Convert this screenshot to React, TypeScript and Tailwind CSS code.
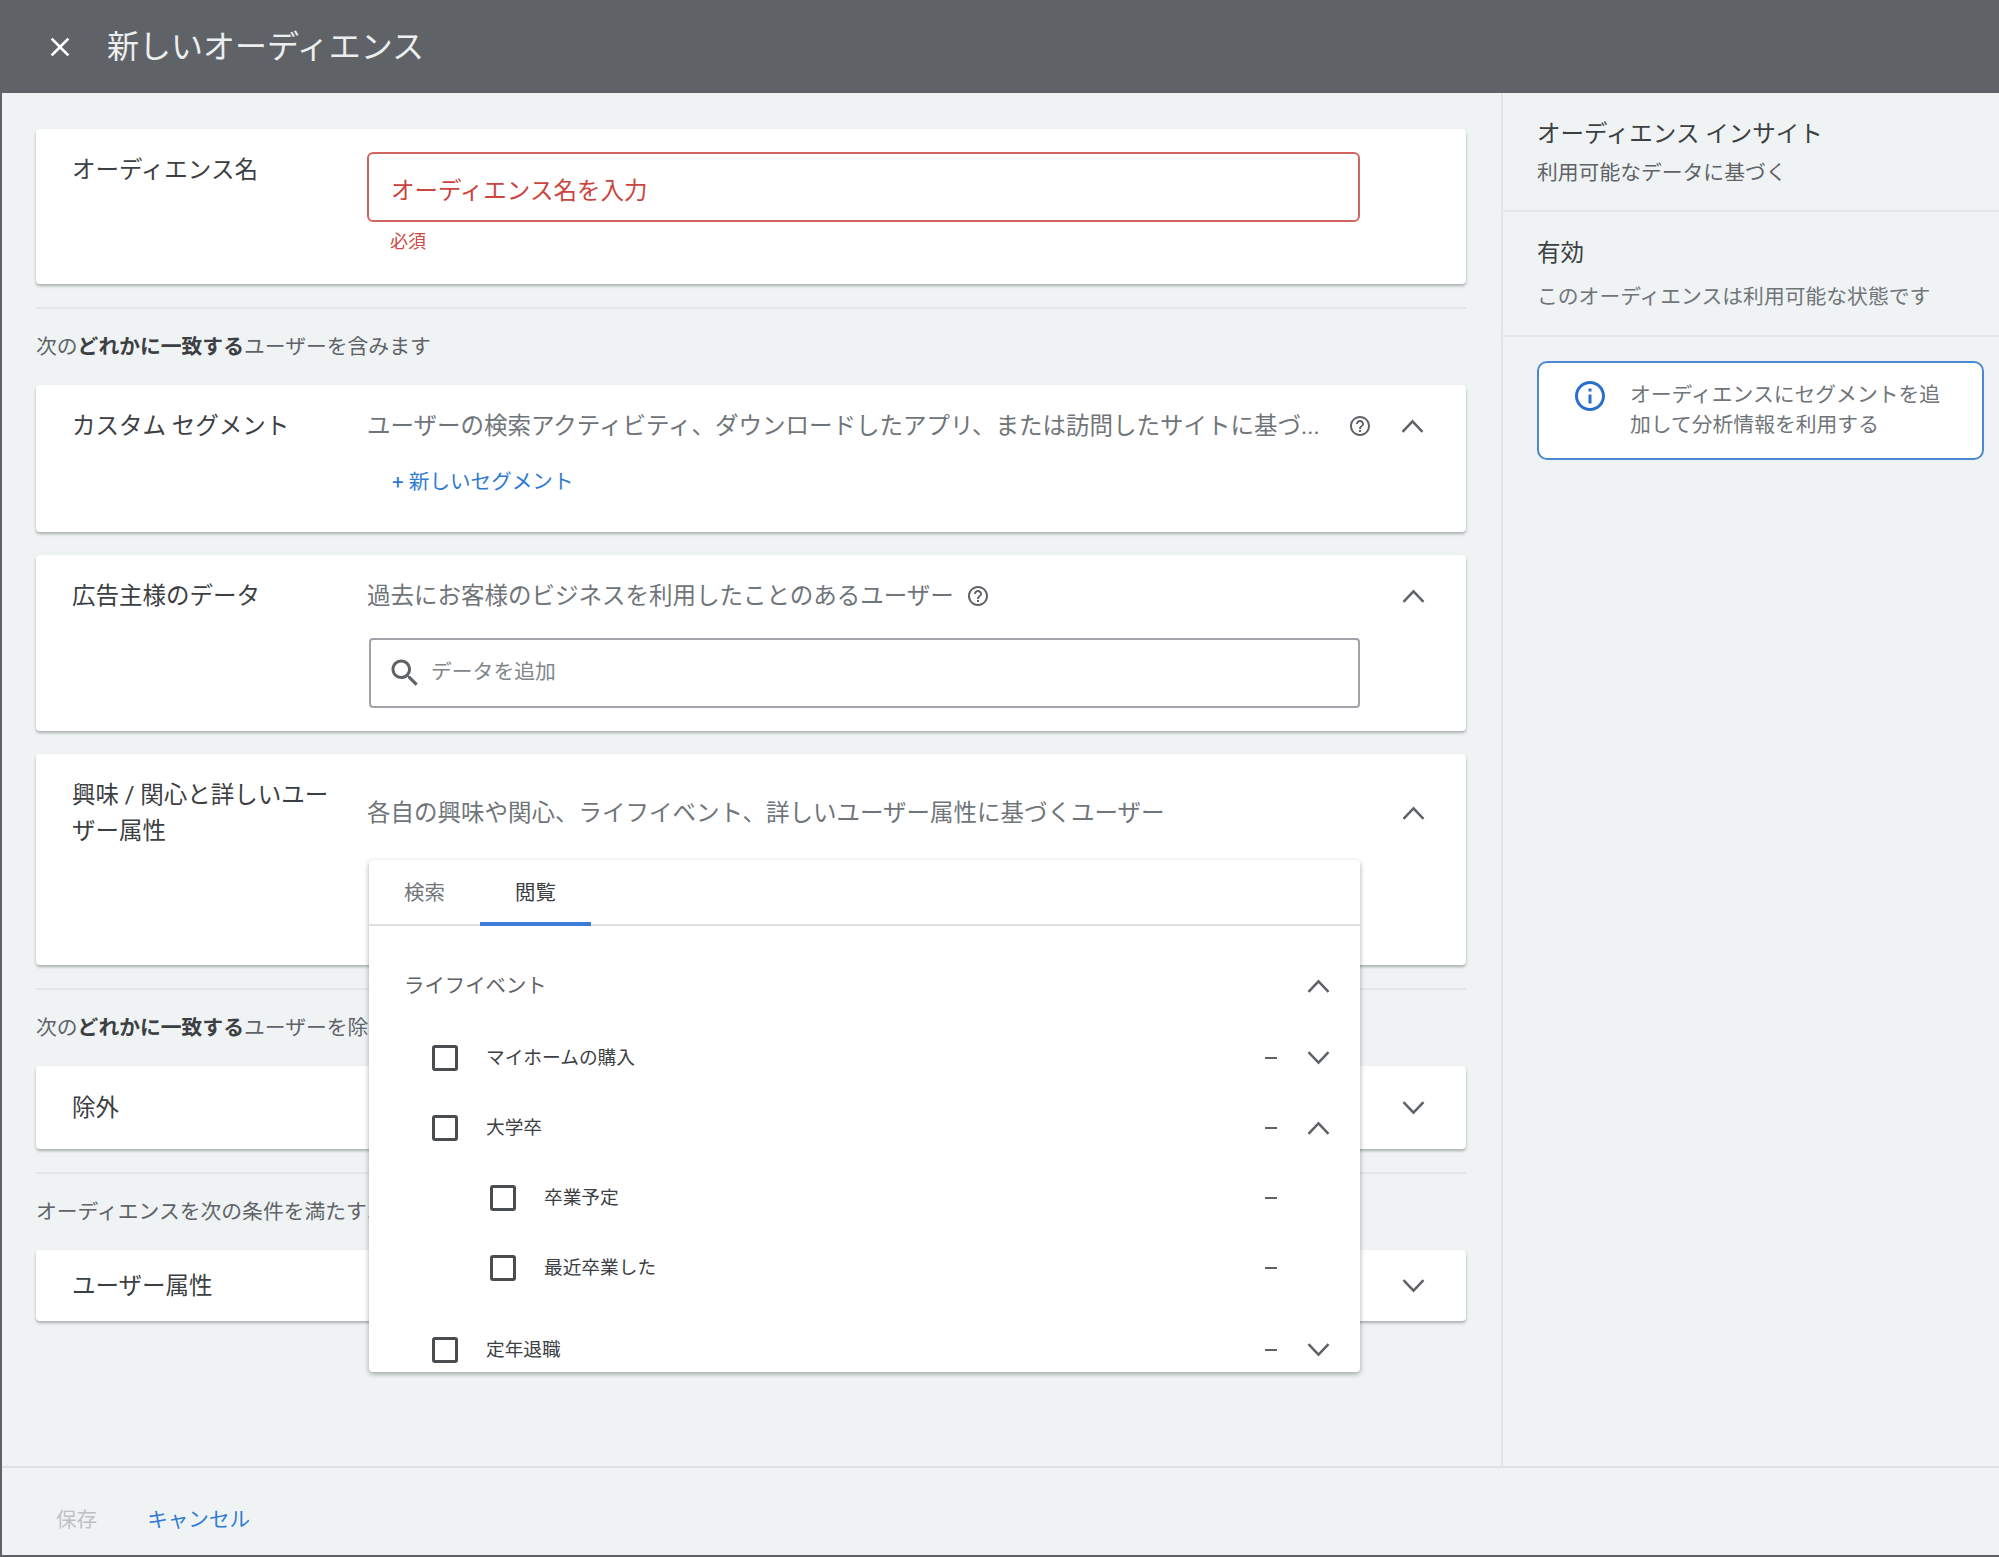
import React from "react";

const Up = ({ c = "text-[#5f6368]" }: { c?: string }) => (
  <svg viewBox="0 0 23 14" className={`w-[23px] h-[14px] fill-none stroke-current shrink-0 ${c}`} strokeWidth="2.5">
    <path d="M1.5 12.8L11.5 2.4L21.5 12.8" />
  </svg>
);
const Down = ({ c = "text-[#5f6368]" }: { c?: string }) => (
  <svg viewBox="0 0 23 14" className={`w-[23px] h-[14px] fill-none stroke-current shrink-0 ${c}`} strokeWidth="2.5">
    <path d="M1.5 1.2L11.5 11.6L21.5 1.2" />
  </svg>
);
const Help = () => (
  <svg viewBox="0 0 24 24" className="w-[24px] h-[24px] fill-[#5f6368] shrink-0">
    <path d="M11 18h2v-2h-2v2zm1-16C6.48 2 2 6.48 2 12s4.48 10 10 10 10-4.48 10-10S17.52 2 12 2zm0 18c-4.41 0-8-3.59-8-8s3.59-8 8-8 8 3.59 8 8-3.59 8-8 8zm0-14c-2.21 0-4 1.79-4 4h2c0-1.1.9-2 2-2s2 .9 2 2c0 2-3 1.75-3 5h2c0-2.25 3-2.5 3-5 0-2.21-1.79-4-4-4z" />
  </svg>
);

const cardBase = "bg-white rounded-[4px] shadow-[0_2px_3px_rgba(60,64,67,0.38)] relative shrink-0";
const labelCol = "w-[295px] shrink-0 text-[23.5px] leading-[36px] text-[#3c4043]";
const desc = "text-[23.5px] leading-[36px] text-[#70757a]";

const SectionLabel = ({ children }: { children: React.ReactNode }) => (
  <div className="h-[76px] pt-[2px] flex items-center text-[20.8px] text-[#5f6368] whitespace-nowrap shrink-0">
    {children}
  </div>
);
const Divider = () => <div className="h-[2px] bg-[#e3e6e8] mt-[23px] shrink-0" />;

const Row = ({
  label,
  chevron,
  nested,
  className = "",
}: {
  label: string;
  chevron?: "up" | "down";
  nested?: boolean;
  className?: string;
}) => (
  <div className={`h-[70px] flex items-center pr-[30px] shrink-0 ${nested ? "pl-[121px]" : "pl-[63px]"} ${className}`}>
    <span className="w-[26px] h-[26px] border-[3px] border-[#4a4d50] rounded-[3px] shrink-0" />
    <span className="ml-[28px] flex-1 text-[18.7px] text-[#3c4043]">{label}</span>
    <span className="w-[12px] h-[2px] bg-[#5f6368] shrink-0" />
    <span className="w-[23px] ml-[30px] flex items-center shrink-0">
      {chevron === "up" && <Up />}
      {chevron === "down" && <Down />}
    </span>
  </div>
);

export default function App() {
  return (
    <div
      className="w-[1999px] h-[1557px] flex flex-col bg-[#eff3f4] border-l-2 border-b-2 border-[#5f6368] overflow-hidden"
      style={{ fontFamily: '"Roboto","Noto Sans CJK JP",sans-serif' }}
    >
      <header className="h-[93px] -ml-[2px] bg-[#5f6368] flex items-center shrink-0 pl-[44px] text-white">
        <svg viewBox="0 0 24 24" className="w-[32px] h-[32px] fill-white shrink-0">
          <path d="M19 6.41L17.59 5 12 10.59 6.41 5 5 6.41 10.59 12 5 17.59 6.41 19 12 13.41 17.59 19 19 17.59 13.41 12z" />
        </svg>
        <h1 className="ml-[31px] text-[32px] font-normal text-[#eceeef] whitespace-nowrap">新しいオーディエンス</h1>
      </header>

      <div className="flex flex-1 min-h-0">
        <main className="w-[1499px] shrink-0 pl-[34px] pr-[35px] pt-[36px] flex flex-col">
          <section className={`${cardBase} h-[155px] flex pl-[36px] pt-[23px]`}>
            <div className={labelCol}>オーディエンス名</div>
            <div className="w-[993px]">
              <div className="h-[70px] border-2 border-[#d0665f] rounded-[6px] flex items-center pl-[22px] pt-[10px] text-[23.5px] text-[#c9453e]">
                オーディエンス名を入力
              </div>
              <div className="mt-[6px] pl-[23px] text-[18px] leading-[28px] text-[#cc4b44]">必須</div>
            </div>
          </section>

          <Divider />
          <SectionLabel>
            <span>次の<b className="font-bold text-[#3c4043]">どれかに一致する</b>ユーザーを含みます</span>
          </SectionLabel>

          <section className={`${cardBase} h-[147px] flex pl-[36px] pt-[23px]`}>
            <div className={labelCol}>カスタム セグメント</div>
            <div className="flex-1 min-w-0 pr-[41px]">
              <div className="flex items-center h-[36px]">
                <span className={`${desc} w-[958px] whitespace-nowrap`}>
                  ユーザーの検索アクティビティ、ダウンロードしたアプリ、または訪問したサイトに基づ...
                </span>
                <span className="ml-[23px]"><Help /></span>
                <span className="ml-[29px]"><Up /></span>
              </div>
              <div className="mt-[20px] pl-[25px] text-[20.6px] leading-[36px] text-[#2f7bd2]">+ 新しいセグメント</div>
            </div>
          </section>

          <section className={`${cardBase} h-[176px] mt-[23px] flex pl-[36px] pt-[23px]`}>
            <div className={labelCol}>広告主様のデータ</div>
            <div className="flex-1 min-w-0 pr-[41px]">
              <div className="flex items-center h-[36px]">
                <span className={`${desc} whitespace-nowrap`}>過去にお客様のビジネスを利用したことのあるユーザー</span>
                <span className="ml-[12px]"><Help /></span>
                <span className="ml-auto"><Up /></span>
              </div>
              <div className="mt-[24px] ml-[2px] w-[991px] h-[70px] border-2 border-[#a0a4a8] rounded-[4px] flex items-center pl-[16px]">
                <svg viewBox="0 0 24 24" className="w-[36px] h-[36px] fill-[#5f6368] shrink-0">
                  <path d="M15.5 14h-.79l-.28-.27C15.41 12.59 16 11.11 16 9.5 16 5.91 13.09 3 9.5 3S3 5.91 3 9.5 5.91 16 9.5 16c1.61 0 3.09-.59 4.23-1.57l.27.28v.79l5 4.99L20.49 19l-4.99-5zm-6 0C7.01 14 5 11.99 5 9.5S7.01 5 9.5 5 14 7.01 14 9.5 11.99 14 9.5 14z" />
                </svg>
                <span className="ml-[8px] text-[20.8px] text-[#80868b]">データを追加</span>
              </div>
            </div>
          </section>

          <section className={`${cardBase} h-[211px] mt-[23px] flex pl-[36px] pt-[23px]`}>
            <div className={`${labelCol} pr-[30px]`}>興味 / 関心と詳しいユーザー属性</div>
            <div className="flex-1 min-w-0 pr-[41px]">
              <div className="flex items-center h-[36px] mt-[18px]">
                <span className={`${desc} whitespace-nowrap`}>各自の興味や関心、ライフイベント、詳しいユーザー属性に基づくユーザー</span>
                <span className="ml-auto"><Up /></span>
              </div>
            </div>

            <div className="absolute left-[333px] top-[106px] z-10 w-[991px] h-[512px] bg-white rounded-[4px] shadow-[0_2px_5px_rgba(60,64,67,0.45)] overflow-hidden flex flex-col">
              <div className="h-[66px] shrink-0 flex border-b-2 border-[#dfe1e3]">
                <div className="w-[111px] flex items-center justify-center text-[20.4px] text-[#70757a] pt-[3px]">検索</div>
                <div className="w-[111px] flex items-center justify-center text-[20.4px] text-[#3c4043] border-b-4 border-[#3b7dd8] -mb-[2px] pt-[5px]">閲覧</div>
              </div>
              <div className="mt-[25px] mb-[2px] h-[70px] shrink-0 flex items-center pl-[35px] pr-[30px] text-[20.4px] text-[#5f6368]">
                <span className="flex-1">ライフイベント</span>
                <Up />
              </div>
              <Row label="マイホームの購入" chevron="down" />
              <Row label="大学卒" chevron="up" />
              <Row label="卒業予定" nested />
              <Row label="最近卒業した" nested />
              <Row label="定年退職" chevron="down" className="mt-[12px]" />
            </div>
          </section>

          <Divider />
          <SectionLabel>
            <span>次の<b className="font-bold text-[#3c4043]">どれかに一致する</b>ユーザーを除外します</span>
          </SectionLabel>

          <section className={`${cardBase} h-[83px] flex items-center pl-[36px] pr-[41px] shadow-[0_1px_2px_rgba(60,64,67,0.25)]`}>
            <div className={labelCol}>除外</div>
            <span className="ml-auto"><Down /></span>
          </section>

          <Divider />
          <SectionLabel>オーディエンスを次の条件を満たすユーザーに絞り込みます</SectionLabel>

          <section className={`${cardBase} h-[71px] flex items-center pl-[36px] pr-[41px] shadow-[0_1px_2px_rgba(60,64,67,0.25)]`}>
            <div className={labelCol}>ユーザー属性</div>
            <span className="ml-auto"><Down /></span>
          </section>
        </main>

        <aside className="flex-1 border-l-2 border-[#e3e6e8] flex flex-col">
          <div className="h-[119px] shrink-0 border-b-2 border-[#e3e6e8] pl-[34px] pt-[23px]">
            <div className="text-[23.5px] leading-[36px] text-[#3c4043]">オーディエンス インサイト</div>
            <div className="mt-[3px] text-[20.8px] leading-[36px] text-[#5f6368]">利用可能なデータに基づく</div>
          </div>
          <div className="h-[125px] shrink-0 border-b-2 border-[#e3e6e8] pl-[34px] pt-[23px]">
            <div className="text-[23.5px] leading-[36px] text-[#3c4043]">有効</div>
            <div className="mt-[8px] text-[20.8px] leading-[36px] text-[#70757a]">このオーディエンスは利用可能な状態です</div>
          </div>
          <div className="mt-[24px] ml-[34px] w-[447px] h-[99px] bg-white border-2 border-[#4a88d4] rounded-[10px] flex pt-[14px] pl-[33px]">
            <svg viewBox="0 0 24 24" className="w-[36px] h-[36px] fill-[#2a6fca] shrink-0 mt-[1px]">
              <path d="M11 7h2v2h-2zm0 4h2v6h-2zm1-9C6.48 2 2 6.48 2 12s4.48 10 10 10 10-4.48 10-10S17.52 2 12 2zm0 18c-4.41 0-8-3.59-8-8s3.59-8 8-8 8 3.59 8 8-3.59 8-8 8z" />
            </svg>
            <div className="ml-[22px] mt-[3px] w-[318px] text-[20.8px] leading-[30px] text-[#70757a]">
              オーディエンスにセグメントを追加して分析情報を利用する
            </div>
          </div>
        </aside>
      </div>

      <footer className="h-[89px] shrink-0 border-t-2 border-[#dfe2e4] flex items-center pt-[18px] pl-[54px] text-[20.6px]">
        <span className="text-[#bdc1c6]">保存</span>
        <span className="ml-[50px] text-[#2f7bd2]">キャンセル</span>
      </footer>
    </div>
  );
}
